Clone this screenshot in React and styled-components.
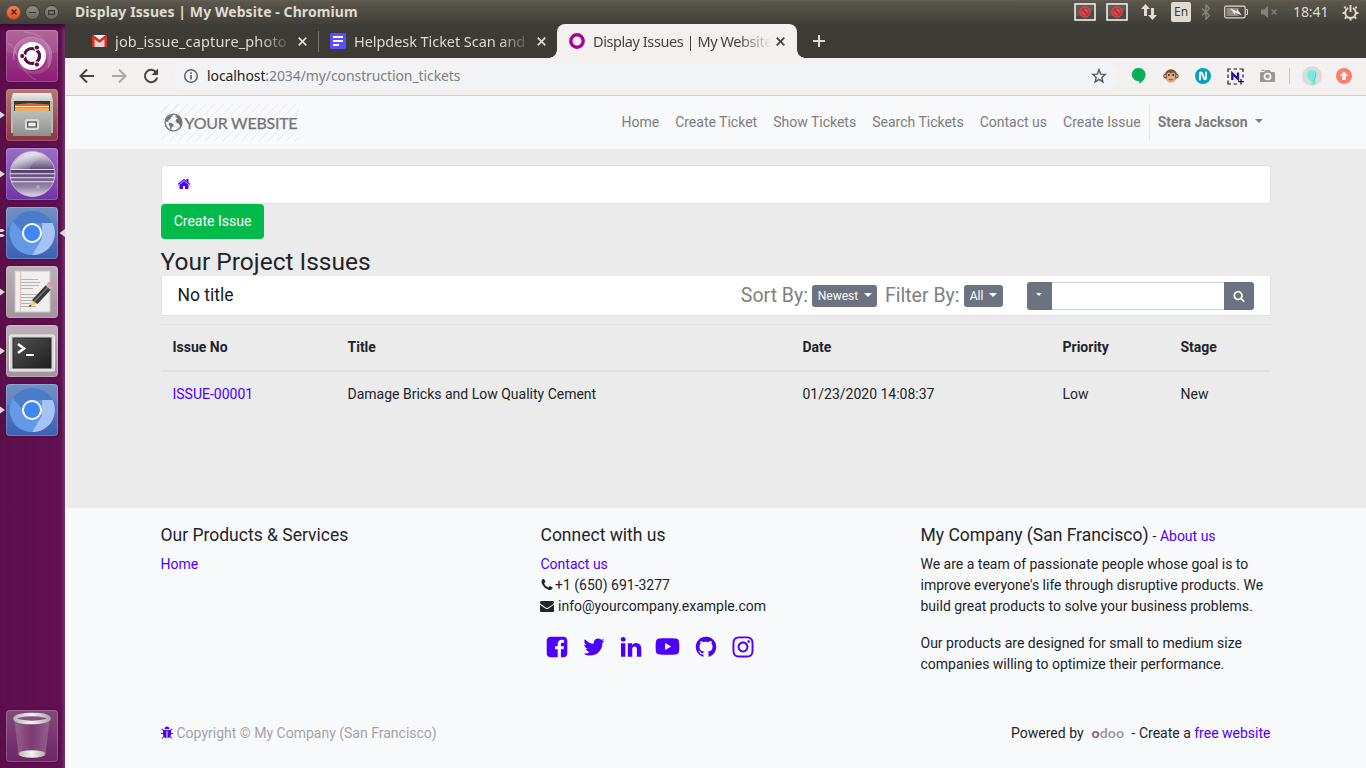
import React from "react";
import styled, { createGlobalStyle, css } from "styled-components";
import { FaYoutube, FaInstagram } from "react-icons/fa";

const GlobalStyle = createGlobalStyle`
  *, *::before, *::after { box-sizing: border-box; }
  body { margin: 0; overflow: hidden; background: #f8f9fb; }
  svg { display: block; flex: none; }
  a { color: #4c00ff; text-decoration: none; }
  p, h3, h4 { margin: 0; font-weight: 400; }
`;

const LINK = "#4c00ff";
const INK = "#212529";
const UI_FONT = `"Noto Sans", "Open Sans", sans-serif`;

/* ---------- Desktop ---------- */

const Desktop = styled.div`
  width: 1366px;
  height: 768px;
  display: flex;
  flex-direction: column;
  overflow: hidden;
  font-family: ${UI_FONT};
`;

const TopPanel = styled.header`
  height: 24px;
  flex: none;
  display: flex;
  align-items: center;
  padding: 0 7px 0 6px;
  background: linear-gradient(#635f53 0, #5a564c 8%, #403f39 100%);
  color: #dfdbd2;
`;

const WindowButtons = styled.div`
  display: flex;
  gap: 4px;
  margin-right: 16px;
`;

const WindowButton = styled.span`
  width: 15px;
  height: 15px;
  border-radius: 50%;
  display: grid;
  place-items: center;
  border: 1px solid ${(p) => (p.$close ? "#8d4a2e" : "#3b3a35")};
  background: ${(p) =>
    p.$close ? "linear-gradient(#f58058, #e2531f)" : "linear-gradient(#8d8b82, #6a6860)"};
`;

const WindowTitle = styled.span`
  font-size: 14px;
  font-weight: 700;
  line-height: 22px;
  white-space: nowrap;
  letter-spacing: 0.08px;
`;

const Indicators = styled.div`
  margin-left: auto;
  display: flex;
  align-items: center;
`;

const Slot = styled.span`
  display: grid;
  place-items: center;
  width: ${(p) => p.$w}px;
  margin-left: ${(p) => p.$gap || 0}px;
`;

const Keyboard = styled.span`
  width: 20px;
  height: 20px;
  margin-left: 13px;
  border-radius: 2px;
  background: #dfdbd2;
  color: #3c3b37;
  font-size: 12px;
  line-height: 20px;
  text-align: center;
`;

const Clock = styled.span`
  margin-left: 15px;
  width: 36px;
  font-size: 14px;
  line-height: 22px;
  letter-spacing: -0.1px;
  white-space: nowrap;
`;

const Workspace = styled.div`
  flex: 1;
  min-height: 0;
  display: flex;
`;

/* ---------- Launcher ---------- */

const Launcher = styled.nav`
  width: 65px;
  flex: none;
  display: flex;
  flex-direction: column;
  padding: 6px 0;
  gap: 7px;
  background: linear-gradient(90deg, #5d0f4c, #611052 94%, #7a3a70 100%);
  box-shadow: inset 0 6px 5px -3px #3a0730;
`;

const LauncherItem = styled.div`
  height: 52px;
  display: flex;
  align-items: center;
  ${(p) => p.$last && css`margin-top: auto;`}
`;

const PipSlot = styled.span`
  width: ${(p) => (p.$end ? 7 : 6)}px;
  height: 14px;
  flex: none;
  display: flex;
  justify-content: ${(p) => (p.$end ? "flex-end" : "flex-start")};
`;

const Tile = styled.div`
  width: 52px;
  height: 52px;
  border-radius: 4px;
  overflow: hidden;
  background: ${(p) => p.$bg};
  box-shadow: inset 0 0 0 1px rgba(255, 255, 255, 0.2), 0 0 3px rgba(0, 0, 0, 0.35);
`;

/* ---------- Browser ---------- */

const Browser = styled.div`
  flex: 1;
  min-width: 0;
  display: flex;
  flex-direction: column;
`;

const TabStrip = styled.div`
  height: 34px;
  flex: none;
  display: flex;
  background: #3c3b36;
  padding-left: 15px;
`;

const Tab = styled.div`
  position: relative;
  width: ${(p) => p.$w}px;
  display: flex;
  align-items: center;
  padding-left: 12px;
  color: ${(p) => (p.$active ? "#46443f" : "#dfdbd2")};
  ${(p) =>
    p.$active &&
    css`
      background: #f2f1ef;
      border-radius: 8px 8px 0 0;
      &::before,
      &::after {
        content: "";
        position: absolute;
        bottom: 0;
        width: 8px;
        height: 8px;
      }
      &::before {
        left: -8px;
        background: radial-gradient(circle at 0 0, transparent 7.5px, #f2f1ef 8px);
      }
      &::after {
        right: -8px;
        background: radial-gradient(circle at 100% 0, transparent 7.5px, #f2f1ef 8px);
      }
    `}
`;

const TabLabel = styled.span`
  width: 177px;
  margin-left: 8px;
  overflow: hidden;
  white-space: nowrap;
  font-size: 14.5px;
  line-height: 22px;
  padding-bottom: 1px;
  letter-spacing: ${(p) => p.$track || 0}px;
  mask-image: linear-gradient(90deg, #000 145px, transparent 178px);
`;

const TabClose = styled.span`
  margin-left: 6px;
  width: 9px;
`;

const TabDivider = styled.span`
  width: 1px;
  height: 21px;
  margin: 7px -1px 0 0;
  background: #77766f;
`;

const NewTab = styled.span`
  display: grid;
  place-items: center;
  margin-left: 16px;
`;

const Toolbar = styled.div`
  height: 38px;
  flex: none;
  display: flex;
  align-items: center;
  padding: 0 12px 1px 13px;
  background: #f2f1ef;
  border-bottom: 1px solid #cfcdc9;
`;

const NavIcons = styled.div`
  display: flex;
  flex: none;
  gap: 14px;
  width: 95px;
`;

const Omnibox = styled.div`
  width: 944px;
  flex: none;
  height: 28px;
  border-radius: 14px;
  background: #f1f3f5;
  display: flex;
  align-items: center;
  padding: 0 10px 0 10px;
`;

const Url = styled.span`
  margin-left: 8px;
  font-size: 14px;
  line-height: 20px;
  letter-spacing: -0.09px;
  color: #7d8083;
  white-space: nowrap;
  b { font-weight: 400; color: #202124; }
`;

const Pushed = styled.span`
  margin-left: auto;
`;

const Extensions = styled.div`
  flex: 1;
  display: flex;
  align-items: center;
  padding-left: 12px;
  gap: 12px;
`;

const Ext = styled.span`
  width: 20px;
  height: 20px;
  flex: none;
  display: grid;
  place-items: center;
`;

const ExtDivider = styled.span`
  width: 1px;
  height: 16px;
  flex: none;
  background: #c9c8c4;
`;

/* ---------- Website ---------- */

const Site = styled.div`
  flex: 1;
  min-height: 0;
  display: flex;
  flex-direction: column;
  font-family: Roboto, sans-serif;
  font-size: 14px;
  line-height: 21px;
  color: ${INK};
  background: #ebebeb;
`;

const Container = styled.div`
  width: 1140px;
  margin: 0 auto;
  padding: 0 15px;
  position: relative;
`;

const SiteHeader = styled.div`
  height: 53px;
  flex: none;
  background: #f8f9fb;
`;

const HeaderRow = styled(Container)`
  display: flex;
  align-items: center;
  height: 53px;
`;

const Brand = styled.div`
  width: 138px;
  height: 37px;
  flex: none;
  display: flex;
  align-items: center;
  padding: 0 0 1px 3px;
  gap: 2px;
  color: #737474;
  font-family: Lato, sans-serif;
  font-size: 16px;
  letter-spacing: -0.25px;
  -webkit-text-stroke: 0.25px #737474;
  white-space: nowrap;
  background: repeating-linear-gradient(135deg, transparent 0 5.6px, #e9eaec 5.6px 6.4px);
`;

const Menu = styled.nav`
  margin-left: auto;
  display: flex;
  align-items: center;
`;

const MenuLink = styled.a`
  padding: 0 8px;
  color: #7c7d7e;
`;

const UserMenu = styled.a`
  height: 37px;
  display: flex;
  align-items: center;
  gap: 7px;
  padding: 0 8px;
  border-left: 1px solid #e6e7e9;
  color: #7c7d7e;
  font-weight: 700;
`;

const Caret = styled.span`
  margin-bottom: 3px;
  border: solid transparent;
  border-width: ${(p) => p.$s || 4}px ${(p) => p.$s || 4}px 0;
  border-top-color: currentColor;
`;

const Main = styled.main`
  height: 359px;
  flex: none;
  padding-top: 16px;
`;

const Breadcrumb = styled.div`
  height: 39px;
  display: flex;
  align-items: center;
  padding: 0 0 2px 15px;
  background: #fff;
  border: 1px solid #dee2e6;
  border-radius: 4px;
`;

const CreateButton = styled.a`
  display: block;
  width: 103px;
  height: 35px;
  line-height: 35px;
  padding-left: 1px;
  text-align: center;
  border-radius: 4px;
  background: #00bb4b;
  color: #fff;
`;

const PageTitle = styled.h3`
  margin-top: 8px;
  font-size: 24.5px;
  line-height: 29px;
`;

const SearchBar = styled.div`
  height: 40px;
  display: flex;
  align-items: center;
  padding: 0 16px;
  background: #fff;
  border: 1px solid #dee2e6;
  border-top: 0;
  color: #808080;
  font-size: 19.5px;
  white-space: nowrap;
`;

const BarTitle = styled.span`
  margin-right: auto;
  color: #16181b;
  font-size: 17.5px;
`;

const DropButton = styled.button`
  width: ${(p) => p.$w}px;
  height: 22px;
  flex: none;
  margin: 1px ${(p) => p.$after}px 0 4px;
  padding: 0 0 0 1px;
  display: flex;
  align-items: center;
  justify-content: center;
  gap: 6px;
  border: 0;
  border-radius: 3px;
  background: #6c727f;
  color: #fff;
  font: 12px/22px Roboto, sans-serif;
`;

const SearchGroup = styled.div`
  display: flex;
  flex: none;
  height: 28px;
  margin: 1px 0 0 15px;
`;

const GroupButton = styled.span`
  width: ${(p) => p.$w}px;
  display: grid;
  place-items: center;
  background: #6c727f;
  color: #fff;
  border-radius: ${(p) => (p.$start ? "3px 0 0 3px" : "0 3px 3px 0")};
`;

const SearchInput = styled.input`
  width: 172px;
  height: 28px;
  border: solid #ced4da;
  border-width: 1px 0;
  background: #fff;
`;

const IssueTable = styled.table`
  width: 100%;
  margin-top: 8px;
  border-collapse: separate;
  border-spacing: 0;
  table-layout: fixed;
  text-align: left;
`;

const HeadCell = styled.th`
  width: ${(p) => p.$w}px;
  height: 48px;
  padding: 0 12px 1px;
  border-top: 1px solid #dee2e6;
  border-bottom: 2px solid #dee2e6;
  font-weight: 700;
`;

const Cell = styled.td`
  height: 44px;
  padding: 0 12px;
`;

/* ---------- Footer ---------- */

const Footer = styled.footer`
  flex: 1;
  background: #f8f9fb;
`;

const FooterGrid = styled(Container)`
  display: grid;
  grid-template-columns: repeat(3, 380px);
  height: 215px;
  padding-top: 17px;
`;

const FooterColumn = styled.section`
  width: 350px;
`;

const FooterHeading = styled.h4`
  height: 21px;
  margin-bottom: 8px;
  font-size: 17.5px;
  white-space: nowrap;
  small { font-size: 14px; margin-left: 0.5px; }
`;

const ContactLine = styled.div`
  display: flex;
  align-items: center;
  margin-left: -1px;
  gap: ${(p) => p.$gap || 0}px;
  svg { margin-bottom: 1px; }
`;

const Paragraph = styled.p`
  margin-bottom: 16px;
  white-space: nowrap;
`;

const Socials = styled.div`
  display: flex;
  align-items: center;
  margin: 17px 0 0 4px;
  color: ${LINK};
`;

const Social = styled.span`
  width: ${(p) => p.$w}px;
  display: flex;
`;

const Legal = styled(Container)`
  display: flex;
  align-items: center;
  justify-content: space-between;
  height: 21px;
`;

const Copyright = styled.span`
  display: flex;
  align-items: center;
  gap: 3px;
  color: #a2a4a7;
  svg { color: ${LINK}; margin: 0 0 1px -1px; }
`;

const Powered = styled.span`
  display: flex;
  white-space: pre;
`;

const OdooMark = styled.span`
  width: 32px;
  margin: -1px 8px 1px 8px;
  font-family: Lato, sans-serif;
  font-weight: 700;
  font-size: 14px;
  letter-spacing: 0.1px;
  color: #9a9a9a;
  b { color: #8f6384; }
`;

/* ---------- Icon paths on the 1792 grid ---------- */

const GLYPHS = {
  home: "M1472 992v480q0 26-19 45t-45 19h-384v-384h-256v384h-384q-26 0-45-19t-19-45v-480q0-1 .5-3t.5-3l575-474 575 474q1 2 1 6zm223-69l-62 74q-8 9-21 11h-3q-13 0-21-7l-692-577-692 577q-12 8-24 7-13-2-21-11l-62-74q-8-10-7-23.5t11-21.5l719-599q32-26 76-26t76 26l244 204v-195q0-14 9-23t23-9h192q14 0 23 9t9 23v408l219 182q10 8 11 21.5t-7 23.5z",
  search: "M1216 832q0-185-131.5-316.5t-316.5-131.5-316.5 131.5-131.5 316.5 131.5 316.5 316.5 131.5 316.5-131.5 131.5-316.5zm512 832q0 52-38 90t-90 38q-54 0-90-38l-343-342q-179 124-399 124-143 0-273.5-55.5t-225-150-150-225-55.5-273.5 55.5-273.5 150-225 225-150 273.5-55.5 273.5 55.5 225 150 150 225 55.5 273.5q0 220-124 399l343 343q37 37 37 90z",
  phone: "M1600 1240q0 27-10 70.5t-21 68.5q-21 50-122 106-94 51-186 51-27 0-53-3.5t-57.5-12.5-47-14.5-55.5-20.5-49-18q-98-35-175-83-127-79-264-216t-216-264q-48-77-83-175-3-9-18-49t-20.5-55.5-14.5-47-12.5-57.5-3.5-53q0-92 51-186 56-101 106-122 25-11 68.5-21t70.5-10q14 0 21 3 18 6 53 76 11 19 30 54t35 63.5 31 53.5q3 4 17.5 25t21.5 35.5 7 28.5q0 20-28.5 50t-62 55-62 53-28.5 46q0 9 5 22.5t8.5 20.5 14 24 11.5 19q76 137 174 235t235 174q2 1 19 11.5t24 14 20.5 8.5 22.5 5q18 0 46-28.5t53-62 55-62 50-28.5q14 0 28.5 7t35.5 21.5 25 17.5q25 15 53.5 31t63.5 35 54 30q70 35 76 53 3 7 3 21z",
  envelope: "M1792 710v794q0 66-47 113t-113 47h-1472q-66 0-113-47t-47-113v-794q44 49 101 87 362 246 497 345 57 42 92.5 65.5t94.5 48 110 24.5h2q51 0 110-24.5t94.5-48 92.5-65.5q170-123 498-345 57-39 100-87zm0-294q0 79-49 151t-122 123q-376 261-468 325-10 7-42.5 31t-54 38.5-52 32.5-57.5 27-50 9h-2q-23 0-50-9t-57.5-27-52-32.5-54-38.5-42.5-31q-91-64-262-182.5t-205-142.5q-62-42-117-115.5t-55-136.5q0-78 41.5-130t118.5-52h1472q65 0 112.5 47t47.5 113z",
  facebook: "M1376 128q119 0 203.5 84.5t84.5 203.5v960q0 119-84.5 203.5t-203.5 84.5h-188v-595h199l30-232h-229v-148q0-56 23.5-84t91.5-28l122-1v-207q-63-9-178-9-136 0-217.5 80t-81.5 226v171h-200v232h200v595h-532q-119 0-203.5-84.5t-84.5-203.5v-960q0-119 84.5-203.5t203.5-84.5h960z",
  twitter: "M1684 408q-67 98-162 167 1 14 1 42 0 130-38 259.5t-115.5 248.5-184.5 210.5-258 146-323 54.5q-271 0-496-145 35 4 78 4 225 0 401-138-105-2-188-64.5t-114-159.5q33 5 61 5 43 0 85-11-112-23-185.5-111.5t-73.5-205.5v-4q68 38 146 41-66-44-105-115t-39-154q0-88 44-163 121 149 294.5 238.5t371.5 99.5q-8-38-8-74 0-134 94.5-228.5t228.5-94.5q140 0 236 102 109-21 205-78-37 115-142 178 93-10 186-50z",
  linkedin: "M477 625v991h-330v-991h330zm21-306q1 73-50.5 122t-135.5 49h-2q-82 0-132-49t-50-122q0-74 51.5-122.5t134.5-48.5 133 48.5 51 122.5zm1166 729v568h-329v-530q0-105-40.5-164.5t-126.5-59.5q-63 0-105.5 34.5t-63.5 85.5q-11 30-11 81v553h-329q2-399 2-647t-1-296l-1-48h329v144h-2q20-32 41-56t56.5-52 87-43.5 114.5-15.5q171 0 275 113.5t104 332.5z",
  github: "M896 128q209 0 385.5 103t279.5 279.5 103 385.5q0 251-146.5 451.5t-378.5 277.5q-27 5-40-7t-13-30q0-3 .5-76.5t.5-134.5q0-97-52-142 57-6 102.5-18t94-39 81-66.5 53-105 20.5-150.5q0-119-79-206 37-91-8-204-28-9-81 11t-92 44l-38 24q-93-26-192-26t-192 26q-16-11-42.5-27t-83.5-38.5-85-13.5q-45 113-8 204-79 87-79 206 0 85 20.5 150t52.5 105 80.5 67 94 39 102.5 18q-39 36-49 103-21 10-45 15t-57 5-65.5-21.5-55.5-62.5q-19-32-48.5-52t-49.5-24l-20-3q-21 0-29 4.5t-5 11.5 9 14 13 12l7 5q22 10 43.5 38t31.5 51l10 23q13 38 44 61.5t67 30 69.5 7 55.5-3.5l23-4q0 38 .5 88.5t.5 54.5q0 18-13 30t-40 7q-232-77-378.5-277.5t-146.5-451.5q0-209 103-385.5t279.5-279.5 385.5-103z",
  bug: "M1696 960q0 26-19 45t-45 19h-224q0 171-67 290l208 209q19 19 19 45t-19 45q-18 19-45 19t-45-19l-198-197q-5 5-15 13t-42 28.5-65 36.5-82 29-97 13v-896h-128v896q-51 0-101.5-13.5t-87-33-66-39-43.5-32.5l-15-14-183 207q-20 21-48 21-24 0-43-16-19-18-20.5-44.5t15.5-46.5l202-227q-58-114-58-274h-224q-26 0-45-19t-19-45 19-45 45-19h224v-294l-173-173q-19-19-19-45t19-45 45-19 45 19l173 173h844l173-173q19-19 45-19t45 19 19 45-19 45l-173 173v294h224q26 0 45 19t19 45zm-480-576h-640q0-133 93.5-226.5t226.5-93.5 226.5 93.5 93.5 226.5z",
};

const Glyph = ({ name, size, color = "currentColor" }) => (
  <svg width={size} height={size} viewBox="0 0 1792 1792" fill={color}>
    <path d={GLYPHS[name]} />
  </svg>
);

/* ---------- Small drawings ---------- */

const BlockedScreen = () => (
  <svg width="22" height="18" viewBox="0 0 22 18">
    <rect x="1" y="1" width="20" height="16" fill="#4a4948" stroke="#f0efec" strokeWidth="1.6" />
    <path d="M2 2h18v5L2 14z" fill="#6f6e6c" opacity=".5" />
    <circle cx="11" cy="9" r="5.8" fill="#e0474b" />
    <circle cx="11" cy="9" r="4" fill="none" stroke="#b3343c" strokeWidth="1.1" />
    <path d="M8.200 6.200l5.600 5.600" stroke="#a02b34" strokeWidth="1.4" />
  </svg>
);

const NetworkArrows = () => (
  <svg width="18" height="18" viewBox="0 0 18 18" fill="#dfdbd2">
    <path d="M5.500 1L10 6H7v7H4V6H1zM12.500 17L8 12h3V5h3v7h3z" />
  </svg>
);

const Bluetooth = () => (
  <svg width="10" height="16" viewBox="0 0 10 16" fill="none" stroke="#8b8880" strokeWidth="1.3">
    <path d="M1 4.500l7.500 7L5 15V1l3.500 3.500L1 11.500" />
  </svg>
);

const Battery = () => (
  <svg width="24" height="14" viewBox="0 0 24 14">
    <rect x="0.700" y="1.200" width="20.500" height="11.600" rx="1.500" fill="none" stroke="#dfdbd2" strokeWidth="1.200" />
    <rect x="2.500" y="3" width="12" height="8" fill="#8e8b83" />
    <path d="M22 4.500h1.500v5H22" fill="none" stroke="#dfdbd2" />
    <path d="M6 3l7 3.500V4l5 6.500-7-3V10z" fill="#efece5" />
  </svg>
);

const Muted = () => (
  <svg width="18" height="14" viewBox="0 0 18 14">
    <path d="M1 4.500h3L8 1v12L4 9.500H1z" fill="#85827a" />
    <path d="M11.500 4.500l5 5m0-5l-5 5" stroke="#85827a" strokeWidth="1.400" />
  </svg>
);

const PowerCog = () => (
  <svg width="17" height="17" viewBox="0 0 17 17" fill="none" stroke="#dfdbd2">
    <path d="M6.200 4A5.300 5.300 0 1 0 10.800 4" strokeWidth="1.900" />
    <path d="M8.500 1v7" strokeWidth="1.900" />
    <path d="M3.800 4.200L2.300 2.800M13.200 4.200l1.500-1.400M3 9H.6M14 9h2.400M4.400 13L2.800 14.600M12.600 13l1.600 1.600M8.500 14.400v2.200" strokeWidth="2" />
  </svg>
);

const CloseX = () => (
  <svg width="9" height="9" viewBox="0 0 9 9" stroke="currentColor" strokeWidth="1.700">
    <path d="M.7.7l7.600 7.600M8.300.7L.7 8.300" />
  </svg>
);

const Gmail = () => (
  <svg width="15" height="12" viewBox="0 0 15 12">
    <path d="M1 0h13v12H1z" fill="#f1eeee" />
    <path d="M3 6l4.500 3L12 6v6H3z" fill="#dcd5d5" />
    <path d="M0 1.200C0 .3.800 0 1.500 0L7.500 4.800 13.500 0c.8 0 1.500.4 1.500 1.200V11c0 .6-.4 1-1 1h-1.600V4.200L7.500 8 2.600 4.200V12H1c-.6 0-1-.4-1-1z" fill="#da2f22" />
  </svg>
);

const DocIcon = () => (
  <svg width="16" height="16" viewBox="0 0 16 16">
    <rect width="16" height="16" rx="1.500" fill="#5f4dfa" />
    <path d="M3 4h10M3 8h10M3 12h6" stroke="#fff" strokeWidth="2" />
  </svg>
);

const RingIcon = () => (
  <svg width="16" height="16" viewBox="0 0 16 16">
    <circle cx="8" cy="8" r="6.200" fill="#fbeef8" stroke="#a8008c" strokeWidth="3.400" />
  </svg>
);

const Arrow = ({ color, flip }) => (
  <svg width="18" height="18" viewBox="0 0 18 18" fill="none" stroke={color} strokeWidth="2">
    <path d={flip ? "M2 9h13M9 2.500L15.500 9 9 15.500" : "M16 9H3M9 2.500L2.500 9 9 15.500"} />
  </svg>
);

const Reload = () => (
  <svg width="18" height="18" viewBox="0 0 18 18">
    <path d="M14.300 5.500A6.200 6.200 0 1 0 15.200 10.500" fill="none" stroke="#45443f" strokeWidth="2" />
    <path d="M16 1.500v6.500H9.500z" fill="#45443f" />
  </svg>
);

const InfoIcon = () => (
  <svg width="16" height="16" viewBox="0 0 16 16">
    <circle cx="8" cy="8" r="6.300" fill="none" stroke="#5f6368" strokeWidth="1.500" />
    <path d="M8 7v4.500M8 4.300v1.700" stroke="#5f6368" strokeWidth="1.700" />
  </svg>
);

const Star = () => (
  <svg width="16" height="16" viewBox="0 0 16 16" fill="none" stroke="#55585c" strokeWidth="1.400">
    <path d="M8 1.800l1.700 4.300 4.600.3-3.500 3 1.100 4.500L8 11.400l-3.900 2.500 1.100-4.500-3.500-3 4.600-.3z" />
  </svg>
);

const Bubble = () => (
  <svg width="16" height="16" viewBox="0 0 16 16">
    <path d="M8 0a6.600 6.600 0 0 1 6.600 6.600c0 4-3.200 7.400-6.300 9.200v-2.700A6.600 6.600 0 1 1 8 0z" fill="#0aaf5b" />
  </svg>
);

const Monkey = () => (
  <svg width="16" height="16" viewBox="0 0 16 16">
    <circle cx="2.400" cy="8" r="2.200" fill="#8a5a3c" />
    <circle cx="13.600" cy="8" r="2.200" fill="#8a5a3c" />
    <circle cx="8" cy="7.500" r="6.200" fill="#7a5038" />
    <circle cx="2.300" cy="8" r="1" fill="#e8b48c" />
    <circle cx="13.700" cy="8" r="1" fill="#e8b48c" />
    <ellipse cx="5.900" cy="7" rx="2.300" ry="2.500" fill="#dfb28a" />
    <ellipse cx="10.100" cy="7" rx="2.300" ry="2.500" fill="#dfb28a" />
    <ellipse cx="8" cy="11.200" rx="4.700" ry="3.500" fill="#dfb28a" />
    <circle cx="5.900" cy="7" r="1" fill="#2d2320" />
    <circle cx="10.100" cy="7" r="1" fill="#2d2320" />
    <path d="M5.600 11h4.800c-.3 2-4.500 2-4.800 0z" fill="#b84a42" />
  </svg>
);

const TealN = () => (
  <svg width="16" height="16" viewBox="0 0 16 16">
    <circle cx="8" cy="8" r="8" fill="#0a9fc2" />
    <path d="M5 11.500V6c0-1.900 1.600-1.900 2.200-.4L8.900 10.300c.6 1.600 2.100 1.300 2.100-.4V4.500" fill="none" stroke="#fff" strokeWidth="1.900" strokeLinecap="round" />
  </svg>
);

const DashedN = () => (
  <svg width="17" height="17" viewBox="0 0 17 17">
    <path d="M1 4V1h3M6.500 1h3.500M12.500 1H16v3M16 6.500V9.500M1 6.500V10M1 12.500V16h3M6.500 16H10" fill="none" stroke="#1c1c1c" strokeWidth="1.200" />
    <path d="M5.300 12V5.500L11 11V4.500" fill="none" stroke="#2c119c" strokeWidth="2.300" />
    <path d="M14 11v5.500M11.300 13.700h5.500" stroke="#1c1c1c" strokeWidth="1.300" />
  </svg>
);

const Camera = () => (
  <svg width="15" height="14" viewBox="0 0 15 14">
    <path d="M1 3h3.200L5.500 1h4l1.300 2H14a1 1 0 0 1 1 1v8a1 1 0 0 1-1 1H1a1 1 0 0 1-1-1V4a1 1 0 0 1 1-1z" fill="#999" />
    <circle cx="7.500" cy="7.500" r="3" fill="#999" stroke="#fff" strokeWidth="1.700" />
    <rect x="1.500" y="0.700" width="3" height="1.200" fill="#999" />
  </svg>
);

const Avatar = () => (
  <svg width="20" height="20" viewBox="0 0 20 20">
    <circle cx="10" cy="10" r="10" fill="#dcdbdb" />
    <path d="M5.500 8c0-3 2-4 4.500-4s4.500 1 4.500 4c0 4-1.500 5-2 7v3l-3 1v-4C7 15.500 5.500 12 5.500 8z" fill="#77ebdd" />
    <path d="M13.300 6.500c.6 3 0 5.500-1.200 7.500v4" fill="none" stroke="#3fcbbb" strokeWidth=".8" />
  </svg>
);

const UpdateArrow = () => (
  <svg width="16" height="16" viewBox="0 0 16 16">
    <circle cx="8" cy="8" r="8" fill="#f9806f" />
    <path d="M8 3.500l4.300 4.600H9.700V12H6.300V8.100H3.700z" fill="#fff" />
  </svg>
);

const GlobeMark = () => (
  <svg width="19" height="19" viewBox="0 0 19 19">
    <circle cx="9.500" cy="9.500" r="8.400" fill="none" stroke="#737474" strokeWidth="1.300" />
    <path d="M1.500 8L4 3.500 7 2l2.200.4-1 1.400-1.500.4.400 1.300-1.600 1.100-1.500 1.300 1 1.300-1.200-.4L2.500 9z" fill="#737474" />
    <path d="M5.200 9.800l2.300.3 2.300 1.700-.5 1.500-1.600 1.200-.5 2.300-1.100-.5-.2-3.300-1.400-1.500z" fill="#737474" />
    <path d="M12 2l3 1.500 2.500 4 .3 3-1 3.200-1.300-1-.4-2-2-.6-1.600-1.700.5-2 1.700-.7-.9-1.300-1.500-.2z" fill="#737474" />
  </svg>
);

/* ---------- Launcher artwork ---------- */

const UbuntuArt = () => (
  <svg width="52" height="52" viewBox="0 0 52 52">
    <path d="M8 30C4 12 22 2 36 10s10 22 6 28C42 22 34 12 24 12S10 20 8 30z" fill="#fff" opacity=".16" />
    <path d="M44 22c6 20-14 26-24 20S12 34 11 28c3 8 10 14 18 13s13-9 15-19z" fill="#fff" opacity=".12" />
    <g fill="none" stroke="#e6b6dc" strokeOpacity=".35" strokeWidth="1">
      <path d="M8 30C4 12 22 2 36 10s10 22 6 28" />
      <path d="M2 14c10 0 8 26 28 36" />
      <path d="M18 2c10 0 26 6 26 26" />
    </g>
    <path d="M0 0h52v22Q26 30 0 22z" fill="#fff" opacity=".1" />
    <circle cx="26" cy="26" r="14" fill="#fff" />
    <circle cx="26" cy="26" r="7.500" fill="none" stroke="#56104a" strokeWidth="3.200" strokeDasharray="13.700 2" strokeDashoffset="6.800" />
    <circle cx="16.200" cy="26" r="2.600" fill="#56104a" stroke="#fff" />
    <circle cx="30.900" cy="17.500" r="2.600" fill="#56104a" stroke="#fff" />
    <circle cx="30.900" cy="34.500" r="2.600" fill="#56104a" stroke="#fff" />
  </svg>
);

const FilesArt = () => (
  <svg width="52" height="52" viewBox="0 0 52 52">
    <defs>
      <linearGradient id="drawer" x1="0" y1="0" x2="0" y2="1">
        <stop offset="0" stopColor="#bdbdbb" />
        <stop offset="1" stopColor="#8f8f8d" />
      </linearGradient>
      <linearGradient id="lid" x1="0" y1="0" x2="0" y2="1">
        <stop offset="0" stopColor="#ededeb" />
        <stop offset="1" stopColor="#cbcbc9" />
      </linearGradient>
    </defs>
    <path d="M7 4h38l2 8v32H5V12z" fill="#b9b9b7" />
    <path d="M7 4h38l2 8H5z" fill="url(#lid)" />
    <path d="M8 12h36v12H8z" fill="#393634" />
    <path d="M9 15.500l15-1.500 19 1.500v6H9z" fill="#d9682b" />
    <path d="M9 18.500h34v4H9z" fill="#f3a860" />
    <path d="M9 17.500h34" stroke="#fae5bd" strokeWidth="1" />
    <path d="M7 22h38v25H7z" fill="url(#drawer)" />
    <rect x="19" y="30" width="14" height="11" rx="2" fill="#d9d9d7" />
    <rect x="21.700" y="33" width="8.600" height="5" fill="#eee" stroke="#474747" strokeWidth="1.200" />
  </svg>
);

const EclipseArt = () => (
  <svg width="52" height="52" viewBox="0 0 52 52">
    <defs>
      <linearGradient id="orb" x1="0" y1="0" x2="0" y2="1">
        <stop offset="0" stopColor="#efeaf4" />
        <stop offset=".2" stopColor="#a99db8" />
        <stop offset=".42" stopColor="#54406c" />
        <stop offset=".62" stopColor="#76648e" />
        <stop offset=".8" stopColor="#9587a8" />
        <stop offset="1" stopColor="#e0d8e9" />
      </linearGradient>
      <linearGradient id="shine" x1="0" y1="0" x2="1" y2="0.400">
        <stop offset="0" stopColor="#fff" stopOpacity=".75" />
        <stop offset="1" stopColor="#fff" stopOpacity="0" />
      </linearGradient>
    </defs>
    <circle cx="26.500" cy="26" r="22.500" fill="url(#orb)" stroke="#d1c4e0" strokeOpacity=".8" />
    <path d="M5 21C8 8 24 3 38 8c-8 3-12 7-14 13z" fill="url(#shine)" />
    <path d="M5 21.500h43M4 25.700h45M4 29.700h45M5 33.800h43" stroke="#e9e3f0" strokeWidth="1.100" />
    <circle cx="32" cy="39" r="2" fill="#fff" opacity=".25" />
  </svg>
);

const ChromiumArt = () => (
  <svg width="52" height="52" viewBox="0 0 52 52">
    <path d="M0 0h52v16Q26 26 0 20z" fill="#fff" opacity=".08" />
    <circle cx="26" cy="26" r="22" fill="#5c8fdd" />
    <path d="M26 4a22 22 0 0 1 20.500 12H26L13 26 7 14.500A22 22 0 0 1 26 4z" fill="#4a7cc9" />
    <path d="M46.500 16A22 22 0 0 1 26 48l10-17V16z" fill="#a5c3f7" />
    <path d="M7 14.500A22 22 0 0 0 26 48l9-15-9 3z" fill="#6598e6" />
    <circle cx="26" cy="26" r="10" fill="#fff" />
    <circle cx="26" cy="26" r="8" fill="#4286f3" />
  </svg>
);

const EditorArt = () => (
  <svg width="52" height="52" viewBox="0 0 52 52">
    <path d="M9 5h35v41H9z" fill="#f0efed" stroke="#c9c6c4" />
    <path d="M14.500 5v41" stroke="#e8a8a2" strokeWidth=".8" />
    <path d="M15 13.500h17M15 16.500h19M15 19.500h18M15 22.500h12M15 28.500h18M15 31.500h14M15 34.500h15M15 37.500h12M15 40.500h15" stroke="#b3b5b5" strokeWidth="1" />
    <path d="M23 41l4-8 5 4.500z" fill="#ecd96a" />
    <path d="M26 34L40 19l5 4.500L31.500 38z" fill="#393939" />
    <path d="M28 36L42 21" stroke="#777" strokeWidth="1.400" />
    <path d="M39.500 19.500l2.300-2.500 5 4.500-2.300 2.500z" fill="#bbb" />
    <path d="M41.800 17c2-2 6.500 2 5 4.500z" fill="#ec8eb5" stroke="#ec8eb5" />
    <path d="M23 41l1-2.500 1.500 1.400z" fill="#222" />
  </svg>
);

const TerminalArt = () => (
  <svg width="52" height="52" viewBox="0 0 52 52">
    <defs>
      <linearGradient id="screen" x1="0" y1="0" x2="1" y2="1">
        <stop offset="0" stopColor="#525252" />
        <stop offset="1" stopColor="#1f1f1f" />
      </linearGradient>
    </defs>
    <rect x="3.500" y="10" width="45" height="36" rx="1.500" fill="#d9d9d7" stroke="#eee" />
    <rect x="7" y="13" width="38" height="30" fill="url(#screen)" stroke="#272727" />
    <path d="M12 19l6 4.500-6 4.500" fill="none" stroke="#fff" strokeWidth="2.600" />
    <path d="M20 30h8" stroke="#fff" strokeWidth="2" />
  </svg>
);

const TrashArt = () => (
  <svg width="52" height="52" viewBox="0 0 52 52">
    <defs>
      <linearGradient id="bin" x1="0" y1="0" x2="1" y2="0">
        <stop offset="0" stopColor="#95608c" />
        <stop offset=".5" stopColor="#7c3b73" />
        <stop offset="1" stopColor="#95608c" />
      </linearGradient>
      <linearGradient id="binrim" x1="0" y1="0" x2="1" y2="0">
        <stop offset="0" stopColor="#b9bab7" />
        <stop offset=".5" stopColor="#f4f4f2" />
        <stop offset="1" stopColor="#abaca9" />
      </linearGradient>
    </defs>
    <path d="M8.500 10h35l-4 34c-3 4-24 4-27 0z" fill="url(#bin)" />
    <ellipse cx="26" cy="44" rx="13.500" ry="3.800" fill="url(#binrim)" />
    <ellipse cx="26" cy="8.500" rx="17" ry="4" fill="#8b4f82" stroke="url(#binrim)" strokeWidth="3.600" />
  </svg>
);

const Pip = ({ kind }) => (
  <svg width="6" height="14" viewBox="0 0 6 14" fill="#dcd5da">
    {kind === "one" && <path d="M0 3.500L5 7 0 10.500z" />}
    {kind === "two" && <path d="M0 3h2.500L5 4.500 2.500 6H0zM0 8h2.500L5 9.500 2.500 11H0z" />}
    {kind === "focus" && <path d="M6 3L.5 7 6 11z" />}
  </svg>
);

const LAUNCHER = [
  { Art: UbuntuArt, bg: "linear-gradient(#a8558f, #8d1c76)" },
  { Art: FilesArt, bg: "linear-gradient(#b5766c, #8b3445)", pip: "one" },
  { Art: EclipseArt, bg: "linear-gradient(#9a6fc4, #7134a9)", pip: "one" },
  { Art: ChromiumArt, bg: "linear-gradient(#6488c0, #3d61b2)", pip: "two", focus: true },
  { Art: EditorArt, bg: "linear-gradient(#bcb0b8, #a2939f)", pip: "one" },
  { Art: TerminalArt, bg: "linear-gradient(#bcb0b8, #a2939f)", pip: "one" },
  { Art: ChromiumArt, bg: "linear-gradient(#6488c0, #3d61b2)", pip: "one" },
  { Art: TrashArt, bg: "linear-gradient(#85477d, #6f2566)", last: true },
];

const MENU = ["Home", "Create Ticket", "Show Tickets", "Search Tickets", "Contact us", "Create Issue"];

const COLUMNS = [
  ["Issue No", 175],
  ["Title", 455],
  ["Date", 260],
  ["Priority", 118],
  ["Stage", 102],
];

const ISSUES = [
  ["ISSUE-00001", "Damage Bricks and Low Quality Cement", "01/23/2020 14:08:37", "Low", "New"],
];

export default function App() {
  return (
    <Desktop>
      <GlobalStyle />
      <TopPanel>
        <WindowButtons>
          <WindowButton $close>
            <svg width="6" height="6" viewBox="0 0 6 6" stroke="#4b2015" strokeWidth="1.300"><path d="M.5.5l5 5M5.500.5l-5 5" /></svg>
          </WindowButton>
          <WindowButton>
            <svg width="7" height="7" viewBox="0 0 7 7" stroke="#373632"><path d="M0 3.500h7" /></svg>
          </WindowButton>
          <WindowButton>
            <svg width="7" height="5" viewBox="0 0 7 5" fill="none" stroke="#373632" strokeWidth="1.200"><path d="M.6.6h5.800v3.800H.6z" /></svg>
          </WindowButton>
        </WindowButtons>
        <WindowTitle>Display Issues | My Website - Chromium</WindowTitle>
        <Indicators>
          <Slot $w={22}><BlockedScreen /></Slot>
          <Slot $w={22} $gap={10}><BlockedScreen /></Slot>
          <Slot $w={18} $gap={12}><NetworkArrows /></Slot>
          <Keyboard>En</Keyboard>
          <Slot $w={10} $gap={10}><Bluetooth /></Slot>
          <Slot $w={24} $gap={13}><Battery /></Slot>
          <Slot $w={18} $gap={12}><Muted /></Slot>
          <Clock>18:41</Clock>
          <Slot $w={17} $gap={13}><PowerCog /></Slot>
        </Indicators>
      </TopPanel>

      <Workspace>
        <Launcher>
          {LAUNCHER.map(({ Art, bg, pip, focus, last }, i) => (
            <LauncherItem key={i} $last={last}>
              <PipSlot>{pip && <Pip kind={pip} />}</PipSlot>
              <Tile $bg={bg}><Art /></Tile>
              <PipSlot $end>{focus && <Pip kind="focus" />}</PipSlot>
            </LauncherItem>
          ))}
        </Launcher>

        <Browser>
          <TabStrip>
            <Tab $w={238}>
              <Gmail />
              <TabLabel $track={0.15}>job_issue_capture_photo</TabLabel>
              <TabClose><CloseX /></TabClose>
            </Tab>
            <TabDivider />
            <Tab $w={239}>
              <DocIcon />
              <TabLabel $track={-0.06}>Helpdesk Ticket Scan and</TabLabel>
              <TabClose><CloseX /></TabClose>
            </Tab>
            <Tab $w={240} $active>
              <RingIcon />
              <TabLabel $track={-0.42}>Display Issues | My Website</TabLabel>
              <TabClose><CloseX /></TabClose>
            </Tab>
            <NewTab>
              <svg width="12" height="12" viewBox="0 0 12 12" stroke="#dfdbd2" strokeWidth="2"><path d="M6 0v12M0 6h12" /></svg>
            </NewTab>
          </TabStrip>

          <Toolbar>
            <NavIcons>
              <Arrow color="#45443f" />
              <Arrow color="#a9a8a4" flip />
              <Reload />
            </NavIcons>
            <Omnibox>
              <InfoIcon />
              <Url><b>localhost</b>:2034/my/construction_tickets</Url>
              <Pushed><Star /></Pushed>
            </Omnibox>
            <Extensions>
              <Ext><Bubble /></Ext>
              <Ext><Monkey /></Ext>
              <Ext><TealN /></Ext>
              <Ext><DashedN /></Ext>
              <Ext><Camera /></Ext>
              <ExtDivider />
              <Ext><Avatar /></Ext>
              <Ext><UpdateArrow /></Ext>
            </Extensions>
          </Toolbar>

          <Site>
            <SiteHeader>
              <HeaderRow>
                <Brand><GlobeMark />YOUR WEBSITE</Brand>
                <Menu>
                  {MENU.map((label) => <MenuLink key={label}>{label}</MenuLink>)}
                  <UserMenu>Stera Jackson <Caret /></UserMenu>
                </Menu>
              </HeaderRow>
            </SiteHeader>

            <Main>
              <Container>
                <Breadcrumb><Glyph name="home" size={14} color={LINK} /></Breadcrumb>
                <CreateButton>Create Issue</CreateButton>
                <PageTitle>Your Project Issues</PageTitle>
                <SearchBar>
                  <BarTitle>No title</BarTitle>
                  Sort By:
                  <DropButton $w={65} $after={8}>Newest <Caret /></DropButton>
                  Filter By:
                  <DropButton $w={39} $after={9}>All <Caret /></DropButton>
                  <SearchGroup>
                    <GroupButton $w={25} $start><Caret $s={3} /></GroupButton>
                    <SearchInput />
                    <GroupButton $w={30}><Glyph name="search" size={12} /></GroupButton>
                  </SearchGroup>
                </SearchBar>
                <IssueTable>
                  <thead>
                    <tr>{COLUMNS.map(([label, w]) => <HeadCell key={label} $w={w}>{label}</HeadCell>)}</tr>
                  </thead>
                  <tbody>
                    {ISSUES.map(([id, ...rest]) => (
                      <tr key={id}>
                        <Cell><a>{id}</a></Cell>
                        {rest.map((value) => <Cell key={value}>{value}</Cell>)}
                      </tr>
                    ))}
                  </tbody>
                </IssueTable>
              </Container>
            </Main>

            <Footer>
              <FooterGrid>
                <FooterColumn>
                  <FooterHeading>Our Products &amp; Services</FooterHeading>
                  <a>Home</a>
                </FooterColumn>
                <FooterColumn>
                  <FooterHeading>Connect with us</FooterHeading>
                  <a>Contact us</a>
                  <ContactLine $gap={1.5}><Glyph name="phone" size={14} />+1 (650) 691-3277</ContactLine>
                  <ContactLine $gap={4.5}><Glyph name="envelope" size={14} />info@yourcompany.example.com</ContactLine>
                  <Socials>
                    <Social $w={37}><Glyph name="facebook" size={24} /></Social>
                    <Social $w={37}><Glyph name="twitter" size={24} /></Social>
                    <Social $w={36}><Glyph name="linkedin" size={24} /></Social>
                    <Social $w={39}><FaYoutube size={25} /></Social>
                    <Social $w={37}><Glyph name="github" size={24} /></Social>
                    <Social $w={24}><FaInstagram size={24} /></Social>
                  </Socials>
                </FooterColumn>
                <FooterColumn>
                  <FooterHeading>My Company (San Francisco)<small> - <a>About us</a></small></FooterHeading>
                  <Paragraph>
                    We are a team of passionate people whose goal is to<br />
                    improve everyone's life through disruptive products. We<br />
                    build great products to solve your business problems.
                  </Paragraph>
                  <Paragraph>
                    Our products are designed for small to medium size<br />
                    companies willing to optimize their performance.
                  </Paragraph>
                </FooterColumn>
              </FooterGrid>
              <Legal>
                <Copyright><Glyph name="bug" size={14} />Copyright © My Company (San Francisco)</Copyright>
                <Powered>Powered by<OdooMark><b>o</b>doo</OdooMark>- Create a <a>free website</a></Powered>
              </Legal>
            </Footer>
          </Site>
        </Browser>
      </Workspace>
    </Desktop>
  );
}
